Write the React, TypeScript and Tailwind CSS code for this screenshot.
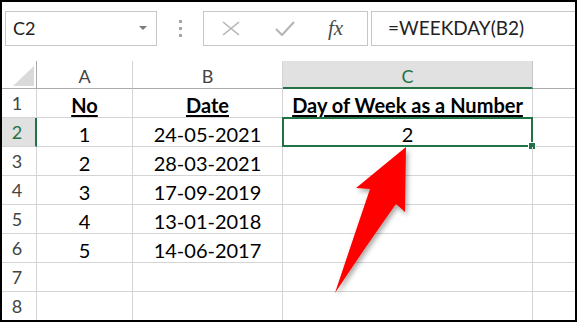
import React from 'react'

const rows = [
  { no: '1', date: '24-05-2021' },
  { no: '2', date: '28-03-2021' },
  { no: '3', date: '17-09-2019' },
  { no: '4', date: '13-01-2018' },
  { no: '5', date: '14-06-2017' },
]

const font = { fontFamily: 'Lato, "Open Sans", sans-serif' }

const App: React.FC = () => {
  const cell = 'border-r border-b border-[#d4d4d4] flex items-end justify-center pb-[2px] text-[20px] text-black leading-none'
  const rowHead = 'border-r border-b border-[#d4d4d4] flex items-center justify-center pr-[4px] text-[18px] text-[#444] leading-none'

  return (
    <div className='w-[577px] h-[322px] border-2 border-black bg-white overflow-hidden relative' style={font}>
      {/* formula bar */}
      <div className='h-[59px] flex items-start pt-[9px] pl-[3px]'>
        <div className='w-[152px] h-[35px] border border-[#c6c6c6] flex items-center justify-between pl-[7px] pr-[9px]'>
          <span className='text-[18px] text-[#222]'>C2</span>
          <svg width='8' height='5' viewBox='0 0 8 5'>
            <path d='M0 0 L8 0 L4 4 Z' fill='#7a7a7a' />
          </svg>
        </div>
        <div className='w-[46px] h-[35px] flex flex-col items-center justify-center gap-[4px]'>
          <span className='w-[3px] h-[3px] bg-[#a6a6a6]' />
          <span className='w-[3px] h-[3px] bg-[#a6a6a6]' />
          <span className='w-[3px] h-[3px] bg-[#a6a6a6]' />
        </div>
        <div className='w-[165px] h-[35px] border border-[#c6c6c6] flex items-center'>
          <svg className='ml-[18px]' width='18' height='15' viewBox='0 0 18 15'>
            <path d='M1 1 L17 14 M17 1 L1 14' stroke='#b4b4b4' strokeWidth='1.6' fill='none' />
          </svg>
          <svg className='ml-[35px]' width='20' height='15' viewBox='0 0 20 15'>
            <path d='M1 8 L7 14 L19 1' stroke='#b4b4b4' strokeWidth='2' fill='none' />
          </svg>
          <span
            className='ml-[33px] text-[21px] italic text-[#4a4a4a] leading-none'
            style={{ fontFamily: '"Liberation Serif", serif' }}
          >
            fx
          </span>
        </div>
        <div className='ml-[3px] flex-1 h-[35px] border border-r-0 border-[#c6c6c6] flex items-center pl-[16px]'>
          <span className='text-[19px] text-[#222]'>=WEEKDAY(B2)</span>
        </div>
      </div>

      {/* sheet */}
      <div className='grid grid-cols-[35px_96px_150px_250px_1fr] grid-rows-[28px_repeat(8,29px)] relative'>
        <div className='border-r border-b border-[#ababab] relative'>
          <svg className='absolute left-[11px] top-[5px]' width='21' height='20' viewBox='0 0 21 20'>
            <path d='M21 0 L21 20 L0 20 Z' fill='#dadada' />
          </svg>
        </div>
        <div className='border-r border-b border-[#ababab] border-r-[#d4d4d4] flex items-center justify-center pt-[3px] text-[18px] text-[#444]'>A</div>
        <div className='border-r border-b border-[#ababab] border-r-[#d4d4d4] flex items-center justify-center pt-[3px] text-[18px] text-[#444]'>B</div>
        <div className='bg-[#e1e1e1] border-r border-r-[#c6c6c6] border-b-2 border-b-[#217346] flex items-center justify-center pt-[4px] text-[18px] text-[#217346]'>C</div>
        <div className='border-b border-[#ababab]' />

        {/* row 1 */}
        <div className={rowHead}>1</div>
        <div className={cell + ' font-bold'}><span className='underline underline-offset-2 decoration-2'>No</span></div>
        <div className={cell + ' font-bold'}><span className='underline underline-offset-2 decoration-2'>Date</span></div>
        <div className={cell + ' font-bold'}><span className='underline underline-offset-2 decoration-2'>Day of Week as a Number</span></div>
        <div className='border-b border-[#d4d4d4]' />

        {rows.map((r, i) => (
          <React.Fragment key={r.no}>
            <div
              className={
                i === 0
                  ? 'bg-[#e1e1e1] border-r-2 border-r-[#217346] border-b border-b-[#d4d4d4] flex items-center justify-center pr-[3px] text-[18px] text-[#217346] leading-none'
                  : rowHead
              }
            >
              {i + 2}
            </div>
            <div className={cell}>{r.no}</div>
            <div className={cell}>{r.date}</div>
            <div className={cell + ' relative'}>
              {i === 0 && (
                <>
                  2
                  <div className='absolute -left-px -top-px -right-px -bottom-px border-2 border-[#217346]' />
                  <div className='absolute -right-[4px] -bottom-[4px] w-[6px] h-[6px] bg-[#217346] border border-white box-content' />
                </>
              )}
            </div>
            <div className='border-b border-[#d4d4d4]' />
          </React.Fragment>
        ))}

        {[7, 8].map((n) => (
          <React.Fragment key={n}>
            <div className={rowHead}>{n}</div>
            <div className={cell} />
            <div className={cell} />
            <div className={cell} />
            <div className='border-b border-[#d4d4d4]' />
          </React.Fragment>
        ))}
      </div>

      {/* callout arrow */}
      <svg className='absolute left-0 top-0 pointer-events-none' width='577' height='322' viewBox='0 0 577 322'>
        <defs>
          <filter id='sh' x='-30%' y='-30%' width='160%' height='160%'>
            <feDropShadow dx='2' dy='3' stdDeviation='2.5' floodColor='#000' floodOpacity='0.35' />
          </filter>
        </defs>
        <path
          d='M404 145 L403 210 L394 202 Q360 250 333 291 Q350 240 368 187 L354 186 Z'
          fill='#ff0000'
          filter='url(#sh)'
        />
      </svg>
    </div>
  )
}

export default App
